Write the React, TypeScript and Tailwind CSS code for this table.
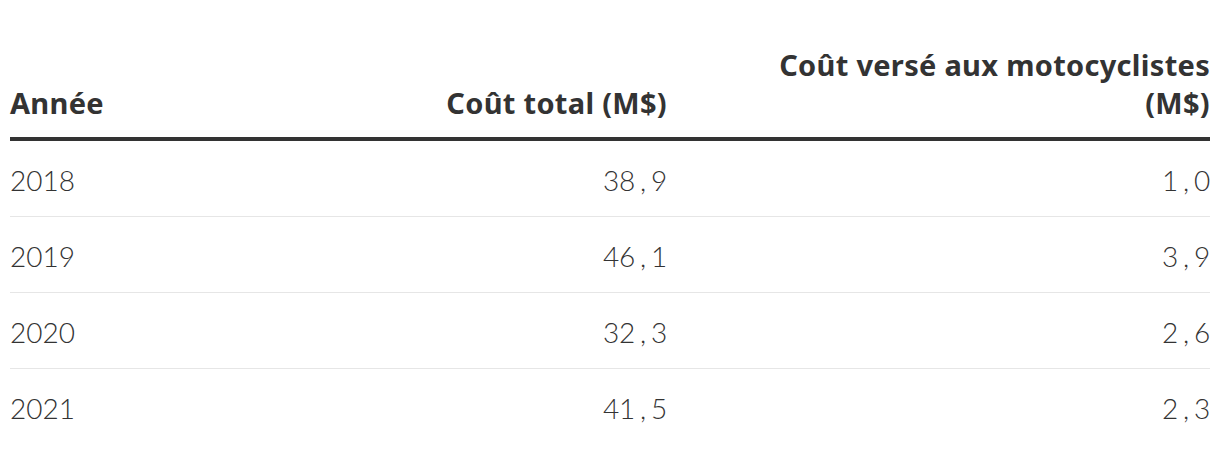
import React from "react";

const rows = [
  ["2018", "38,9", "1,0"],
  ["2019", "46,1", "3,9"],
  ["2020", "32,3", "2,6"],
  ["2021", "41,5", "2,3"],
];

function Tab({ s }: { s: string }) {
  return (
    <span className="inline-flex">
      {s.split("").map((c, i) => (
        <span key={i} className="inline-block w-[16px] text-center">
          {c}
        </span>
      ))}
    </span>
  );
}

export default function App() {
  return (
    <div className="w-[1220px] h-[454px] bg-white text-[#333] px-[10px]">
      <div className="h-[46px]" />
      <div className="grid grid-cols-[300px_357px_543px] border-b-4 border-[#333] pb-[15px] font-['Noto_Sans',sans-serif] font-bold text-[29px] tracking-[0.3px] leading-[38px] items-end">
        <div>Année</div>
        <div className="text-right">Coût total (M$)</div>
        <div className="text-right">
          Coût versé aux motocyclistes
          <br />
          (M$)
        </div>
      </div>
      {rows.map((r, i) => (
        <div
          key={r[0]}
          className={`grid grid-cols-[300px_357px_543px] h-[76px] pt-[2px] items-center font-['Lato',sans-serif] font-light text-[28px] ${
            i < rows.length - 1 ? "border-b border-[#e6e6e6]" : ""
          }`}
        >
          <div>{r[0]}</div>
          <div className="text-right">
            <Tab s={r[1]} />
          </div>
          <div className="text-right">
            <Tab s={r[2]} />
          </div>
        </div>
      ))}
    </div>
  );
}
